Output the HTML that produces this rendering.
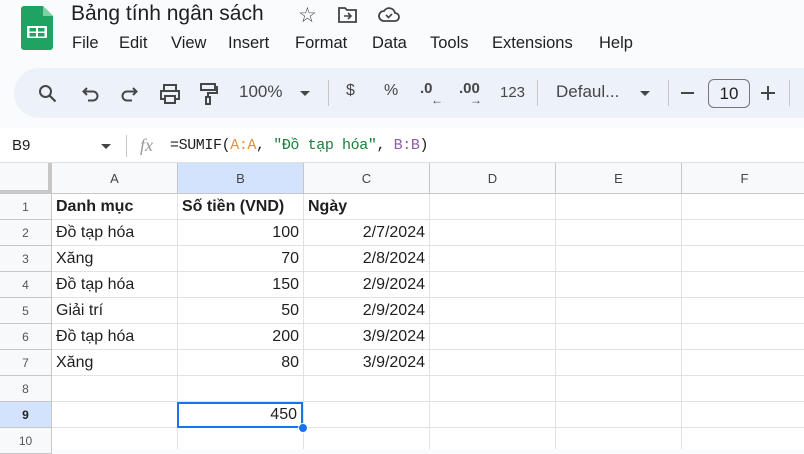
<!DOCTYPE html>
<html><head><meta charset="utf-8"><style>
*{margin:0;padding:0;box-sizing:border-box}
body{width:804px;height:449px;overflow:hidden;background:#f9fbfd;font-family:"Liberation Sans",Arial,sans-serif;position:relative;color:#1f1f1f}
.abs{position:absolute}
.title{left:71px;top:2px;font-size:21px;color:#1f1f1f}
.menu{top:34px;font-size:16.5px;color:#1f1f1f}
.tb{left:14px;top:68px;width:820px;height:50px;background:#edf2fa;border-radius:25px}
.ti{top:82px;font-size:17px;color:#444746}
.sep{width:1px;height:26px;background:#c4c7c5;top:80px}
.fb{left:0;top:128px;width:804px;height:35px;background:#fff;border-bottom:1px solid #e0e0e0}
.grid{left:0;top:163px;width:804px;height:286px;background:#fff}
.ch{position:absolute;top:0;height:31px;background:#f8f9fa;border-right:1px solid #c7c7c7;border-bottom:1px solid #c7c7c7;text-align:center;line-height:31px;font-size:13px;color:#444}
.rh{position:absolute;left:0;width:52px;height:26px;background:#f8f9fa;border-right:1px solid #c7c7c7;border-bottom:1px solid #c7c7c7;text-align:center;line-height:26px;font-size:12px;color:#555}
.c{position:absolute;height:26px;border-right:1px solid #e2e2e2;border-bottom:1px solid #e2e2e2;line-height:26px;font-size:16px;padding:0 4px;white-space:nowrap;overflow:hidden}
.r{text-align:right}
.b{font-weight:bold}
</style></head><body>
<svg class="abs" style="left:21px;top:6px" width="32" height="44" viewBox="0 0 32 44"><path d="M3 0h19l10 10v31a3 3 0 0 1-3 3H3a3 3 0 0 1-3-3V3a3 3 0 0 1 3-3z" fill="#1ea362"/><path d="M22 0v10h10z" fill="#7fd0a4"/><rect x="6" y="20" width="20" height="12" rx="1" fill="#fff"/><rect x="8.5" y="22" width="6.5" height="3.5" fill="#1ea362"/><rect x="17" y="22" width="6.5" height="3.5" fill="#1ea362"/><rect x="8.5" y="27" width="6.5" height="3.5" fill="#1ea362"/><rect x="17" y="27" width="6.5" height="3.5" fill="#1ea362"/></svg>
<div class="abs title">Bảng tính ngân sách</div>
<div class="abs" style="left:298px;top:3px;font-size:21px;color:#444">☆</div>
<svg class="abs" style="left:338px;top:7px" width="20" height="16" viewBox="0 0 20 16"><path d="M1 1h6l2 2h9v12H1z" fill="none" stroke="#444" stroke-width="1.8"/><path d="M6 9h7m-3-3l3 3-3 3" fill="none" stroke="#444" stroke-width="1.6"/></svg>
<svg class="abs" style="left:378px;top:6px" width="22" height="16" viewBox="0 0 22 16"><path d="M6 15a5 5 0 0 1 0-10 6 6 0 0 1 11 2 4 4 0 0 1 0 8z" fill="none" stroke="#444" stroke-width="1.8"/><path d="M8 9l2.5 2.5L14 8" fill="none" stroke="#444" stroke-width="1.6"/></svg>
<div class="abs menu" style="left:72px">File</div>
<div class="abs menu" style="left:119px">Edit</div>
<div class="abs menu" style="left:171px">View</div>
<div class="abs menu" style="left:228px">Insert</div>
<div class="abs menu" style="left:295px">Format</div>
<div class="abs menu" style="left:372px">Data</div>
<div class="abs menu" style="left:430px">Tools</div>
<div class="abs menu" style="left:492px">Extensions</div>
<div class="abs menu" style="left:599px">Help</div>
<div class="abs tb"></div>
<svg class="abs" style="left:38px;top:84px" width="20" height="20" viewBox="0 0 20 20"><circle cx="7.5" cy="7.5" r="5.5" fill="none" stroke="#444746" stroke-width="2"/><path d="M11.5 11.5l6 6" stroke="#444746" stroke-width="2.2"/></svg>
<svg class="abs" style="left:82px;top:86px" width="18" height="16" viewBox="0 0 18 16"><path d="M5 2L1.5 5.5 5 9M2 5.5h9a4.5 4.5 0 0 1 0 9H6" fill="none" stroke="#444746" stroke-width="2"/></svg>
<svg class="abs" style="left:120px;top:86px" width="18" height="16" viewBox="0 0 18 16"><path d="M13 2l3.5 3.5L13 9M16 5.5H7a4.5 4.5 0 0 0 0 9h5" fill="none" stroke="#444746" stroke-width="2"/></svg>
<svg class="abs" style="left:159px;top:84px" width="22" height="20" viewBox="0 0 22 20"><path d="M5 6V1h12v5M5 15H2V7h18v8h-3" fill="none" stroke="#444746" stroke-width="2"/><rect x="6" y="12" width="10" height="7" fill="none" stroke="#444746" stroke-width="2"/></svg>
<svg class="abs" style="left:199px;top:83px" width="20" height="22" viewBox="0 0 20 22"><rect x="2" y="1" width="14" height="6" fill="none" stroke="#444746" stroke-width="2"/><path d="M16 4h2v6H9v4" fill="none" stroke="#444746" stroke-width="2"/><rect x="7" y="14" width="4" height="7" fill="none" stroke="#444746" stroke-width="2"/></svg>
<div class="abs ti" style="left:239px">100%</div>
<div class="abs" style="left:300px;top:91px;width:0;height:0;border-left:5px solid transparent;border-right:5px solid transparent;border-top:5px solid #444746"></div>
<div class="abs sep" style="left:328px"></div>
<div class="abs ti" style="left:346px;font-size:16px">$</div>
<div class="abs ti" style="left:384px;font-size:16px">%</div>
<div class="abs ti" style="left:420px;font-size:15px;font-weight:bold;top:80px">.0</div><div class="abs" style="left:431px;top:93px;font-size:12px;color:#444">←</div>
<div class="abs ti" style="left:459px;font-size:15px;font-weight:bold;top:80px">.00</div><div class="abs" style="left:470px;top:93px;font-size:12px;color:#444">→</div>
<div class="abs ti" style="left:500px;font-size:15px;top:84px">123</div>
<div class="abs sep" style="left:537px"></div>
<div class="abs ti" style="left:556px">Defaul...</div>
<div class="abs" style="left:640px;top:91px;width:0;height:0;border-left:5px solid transparent;border-right:5px solid transparent;border-top:5px solid #444746"></div>
<div class="abs sep" style="left:668px"></div>
<div class="abs" style="left:681px;top:92px;width:13px;height:2px;background:#444746"></div>
<div class="abs" style="left:708px;top:79px;width:42px;height:29px;border:1px solid #747775;border-radius:6px;text-align:center;line-height:27px;font-size:17px;color:#1f1f1f">10</div>
<div class="abs" style="left:761px;top:92px;width:14px;height:2px;background:#444746"></div>
<div class="abs" style="left:767px;top:86px;width:2px;height:14px;background:#444746"></div>
<div class="abs sep" style="left:789px"></div>
<div class="abs fb"></div>
<div class="abs" style="left:12px;top:137px;font-size:15px">B9</div>
<div class="abs" style="left:101px;top:144px;border-left:5px solid transparent;border-right:5px solid transparent;border-top:5px solid #444"></div>
<div class="abs" style="left:126px;top:135px;width:1px;height:22px;background:#c4c7c5"></div>
<div class="abs" style="left:140px;top:135px;font-size:18px;font-style:italic;font-family:'Liberation Serif',serif;color:#999">fx</div>
<div class="abs" style="left:170px;top:137px;font-size:15px;font-family:'Liberation Mono',monospace;letter-spacing:-0.4px;white-space:pre">=SUMIF(<span style="color:#e69138">A:A</span>, <span style="color:#188038">"Đồ tạp hóa"</span>, <span style="color:#8e5ca8">B:B</span>)</div>
<div class="abs grid">
<div class="ch" style="left:0;width:52px;border-right:4px solid #c7c7c7;border-bottom:4px solid #c7c7c7;height:31px"></div>
<div class="ch" style="left:52px;width:126px">A</div>
<div class="ch" style="left:178px;width:126px;background:#d3e3fd">B</div>
<div class="ch" style="left:304px;width:126px">C</div>
<div class="ch" style="left:430px;width:126px">D</div>
<div class="ch" style="left:556px;width:126px">E</div>
<div class="ch" style="left:682px;width:126px">F</div>
</div>
<div class="abs" style="left:0;top:194px;width:804px">
<div class="rh" style="top:0">1</div><div class="rh" style="top:26px">2</div><div class="rh" style="top:52px">3</div><div class="rh" style="top:78px">4</div><div class="rh" style="top:104px">5</div><div class="rh" style="top:130px">6</div><div class="rh" style="top:156px">7</div><div class="rh" style="top:182px">8</div><div class="rh" style="top:208px;background:#d3e3fd;font-weight:bold;color:#1f1f1f">9</div><div class="rh" style="top:234px">10</div>
</div>
<div class="abs" style="left:0;top:194px;width:804px;height:255px">
<!-- rows -->
<div class="c b" style="left:52px;top:0;width:126px">Danh mục</div><div class="c b" style="left:178px;top:0;width:126px">Số tiền (VND)</div><div class="c b" style="left:304px;top:0;width:126px">Ngày</div>
<div class="c" style="left:52px;top:26px;width:126px">Đồ tạp hóa</div><div class="c r" style="left:178px;top:26px;width:126px">100</div><div class="c r" style="left:304px;top:26px;width:126px">2/7/2024</div>
<div class="c" style="left:52px;top:52px;width:126px">Xăng</div><div class="c r" style="left:178px;top:52px;width:126px">70</div><div class="c r" style="left:304px;top:52px;width:126px">2/8/2024</div>
<div class="c" style="left:52px;top:78px;width:126px">Đồ tạp hóa</div><div class="c r" style="left:178px;top:78px;width:126px">150</div><div class="c r" style="left:304px;top:78px;width:126px">2/9/2024</div>
<div class="c" style="left:52px;top:104px;width:126px">Giải trí</div><div class="c r" style="left:178px;top:104px;width:126px">50</div><div class="c r" style="left:304px;top:104px;width:126px">2/9/2024</div>
<div class="c" style="left:52px;top:130px;width:126px">Đồ tạp hóa</div><div class="c r" style="left:178px;top:130px;width:126px">200</div><div class="c r" style="left:304px;top:130px;width:126px">3/9/2024</div>
<div class="c" style="left:52px;top:156px;width:126px">Xăng</div><div class="c r" style="left:178px;top:156px;width:126px">80</div><div class="c r" style="left:304px;top:156px;width:126px">3/9/2024</div>
</div>
<svg class="abs" style="left:52px;top:194px" width="752" height="255"><g stroke="#e2e2e2" stroke-width="1">
<path d="M0 181.5h752M0 207.5h752M0 233.5h752M125.5 0v255M251.5 0v255M377.5 0v255M503.5 0v255M629.5 0v255M0 25.5h752M0 51.5h752M0 77.5h752M0 103.5h752M0 129.5h752M0 155.5h752"/></g></svg>
<div class="abs c r" style="left:177px;top:402px;width:126px;height:26px;border:2px solid #1a73e8;line-height:22px;background:#fff">450</div>
<div class="abs" style="left:298px;top:423px;width:10px;height:10px;border-radius:50%;background:#1a73e8;border:1px solid #fff"></div>
</body></html>
